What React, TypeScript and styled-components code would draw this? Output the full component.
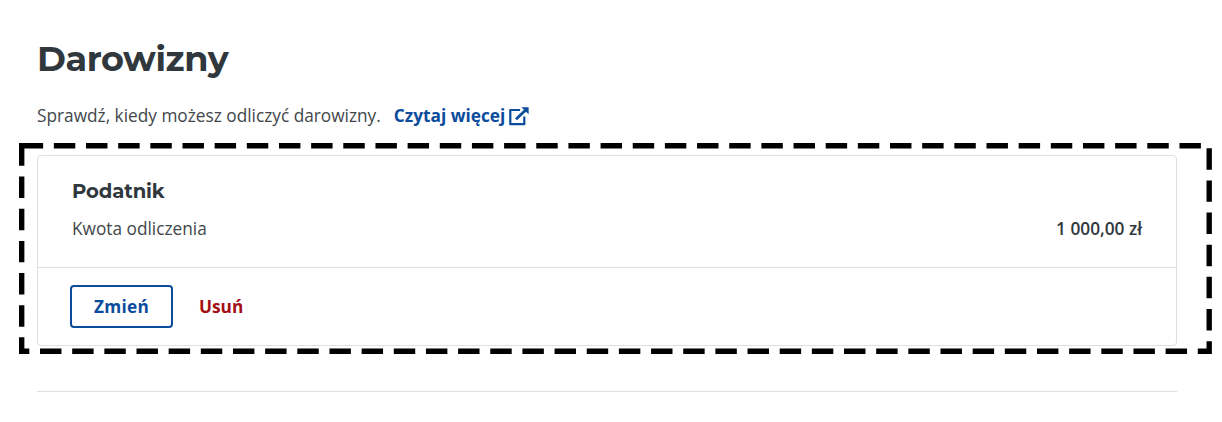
import React from "react";
import styled, { createGlobalStyle } from "styled-components";

const GlobalStyle = createGlobalStyle`
  * { box-sizing: border-box; }
  body {
    margin: 0;
    background: #fff;
    color: #42474b;
    font: 400 17.25px/26px "Open Sans", "Noto Sans", sans-serif;
  }
`;

const Page = styled.main`
  position: relative;
  height: 422px;
  padding: 35px 45px 0 37px;
  overflow: hidden;
`;

const Title = styled.h1`
  margin: 0;
  color: #30373d;
  font: 700 35px/48px Montserrat, Inter, sans-serif;
  letter-spacing: -0.4px;
`;

const Intro = styled.p`
  display: flex;
  align-items: center;
  height: 26px;
  margin: 20px 0 26px;
  white-space: nowrap;
`;

const MoreLink = styled.a`
  display: flex;
  align-items: center;
  gap: 4px;
  margin-left: 13px;
  color: #0b4c9c;
  font-weight: 700;
  text-decoration: none;
`;

const Card = styled.section`
  height: 191px;
  border: 1px solid #dfdfdf;
  border-radius: 4px;
`;

const CardBody = styled.div`
  height: 112px;
  padding: 23px 34px 0;
  border-bottom: 1px solid #dfdfdf;
`;

const CardTitle = styled.h2`
  margin: 0 0 12px;
  color: #30373d;
  font: 700 19.6px/25px Montserrat, Inter, sans-serif;
  letter-spacing: -0.1px;
`;

const Row = styled.div`
  display: flex;
  justify-content: space-between;
`;

const Amount = styled.strong`
  color: #30373d;
  font-weight: 550;
`;

const Actions = styled.div`
  display: flex;
  align-items: center;
  height: 77px;
  padding-left: 32px;
  gap: 26px;
`;

const Button = styled.button<{ $danger?: boolean }>`
  width: ${(p) => (p.$danger ? "auto" : "103px")};
  height: 43px;
  padding: 0;
  border: ${(p) => (p.$danger ? "0" : "2px solid #0b4c9c")};
  border-radius: 4px;
  background: #fff;
  color: ${(p) => (p.$danger ? "#a30f14" : "#0b4c9c")};
  font: inherit;
  font-weight: 700;
  letter-spacing: ${(p) => (p.$danger ? "0" : "0.3px")};
`;

const Divider = styled.hr`
  margin: 45px 0 0;
  border: 0;
  border-top: 1px solid #dfdfdf;
`;

const Highlight = styled.svg`
  position: absolute;
  inset: 0;
  pointer-events: none;
`;

const ExternalIcon = () => (
  <svg width="20" height="19" viewBox="0 0 20 19" fill="none">
    <path d="M11 3H1.3V17.2H15.3V9.5" stroke="currentColor" strokeWidth="2.2" strokeLinejoin="round" />
    <path d="M7 12.3L17 2.7" stroke="currentColor" strokeWidth="2.8" />
    <path d="M12.4 0.3H19.6V7.2Z" fill="currentColor" />
  </svg>
);

export default function App() {
  return (
    <Page>
      <GlobalStyle />
      <Title>Darowizny</Title>
      <Intro>
        <span>Sprawdź, kiedy możesz odliczyć darowizny.</span>
        <MoreLink href="#">
          Czytaj więcej
          <ExternalIcon />
        </MoreLink>
      </Intro>
      <Card>
        <CardBody>
          <CardTitle>Podatnik</CardTitle>
          <Row>
            <span>Kwota odliczenia</span>
            <Amount>1 000,00 zł</Amount>
          </Row>
        </CardBody>
        <Actions>
          <Button>Zmień</Button>
          <Button $danger>Usuń</Button>
        </Actions>
      </Card>
      <Divider />
      <Highlight width="1222" height="422" fill="none">
        <path
          d="M21.7 145.8H1209.2V351.2H21.7Z"
          stroke="#000"
          strokeWidth="5.36"
          strokeDasharray="21.44 10.72"
        />
      </Highlight>
    </Page>
  );
}
